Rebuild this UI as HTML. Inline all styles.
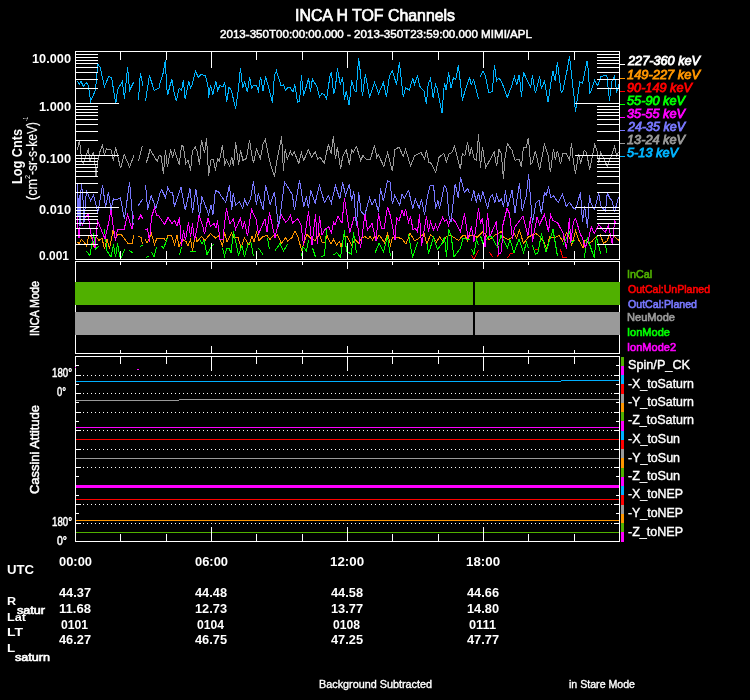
<!DOCTYPE html>
<html><head><meta charset="utf-8"><style>
html,body{margin:0;padding:0;background:#000;width:750px;height:700px;overflow:hidden}
svg{position:absolute;left:0;top:0;will-change:transform}
</style></head><body>
<svg width="750" height="700" viewBox="0 0 750 700" shape-rendering="crispEdges">
<defs><clipPath id="c1"><rect x="75" y="51" width="545" height="209"/></clipPath></defs>
<g clip-path="url(#c1)">
<polyline points="77.0,242.0 79.0,243.5 81.5,239.5 84.0,242.0 86.5,246.0 89.0,235.0 91.5,237.0 93.5,245.5 96.5,237.0 99.0,240.5 102.0,238.0 104.5,249.0 107.0,239.0 109.5,249.0 113.0,230.5 115.5,239.0 118.0,234.0 121.5,235.0 124.0,238.0 128.0,243.5 132.5,243.0 133.5,235.5" fill="none" stroke="#ff9600" stroke-width="1"/>
<polyline points="138.5,236.0 141.0,237.5 142.5,244.5" fill="none" stroke="#ff9600" stroke-width="1"/>
<polyline points="145.0,239.5 147.0,242.5 149.8,238.0 151.0,232.5 154.5,244.5 157.0,238.0 163.5,238.0 166.0,241.0 168.0,235.0 171.5,235.5 174.5,244.5 177.0,235.5 179.0,247.0 182.0,239.0 186.0,241.5 188.0,246.0 190.5,239.5 192.5,250.5 195.5,234.0 197.0,241.5 201.5,236.5 205.0,240.5 210.5,233.5 215.5,238.0 218.5,236.0 222.5,246.0 224.5,232.5 227.0,242.0 231.5,233.0 234.0,238.0 238.0,237.5 241.0,247.5 244.5,238.0 249.0,245.0 252.0,236.0 254.0,241.5 256.5,232.5 259.0,240.5 263.0,236.5 267.0,235.5 270.0,239.5 273.0,236.0 277.5,235.0 281.5,243.5 285.5,237.5 287.5,241.0 292.0,237.5 295.0,231.0 298.0,237.0 301.5,250.0 307.0,234.5 311.0,238.5 315.0,240.5 319.5,234.0 322.0,242.0 325.0,242.0 327.0,235.5 331.0,244.0 333.5,239.5 336.5,245.0 339.5,241.5 341.0,247.0 344.0,236.0 347.5,237.0 351.5,245.0 355.0,239.5 358.5,243.0 361.5,238.5 365.0,236.5 368.0,239.0 370.0,236.5 372.5,240.0 375.0,236.0 377.0,238.5 379.0,235.0 381.5,238.0 384.5,243.0 387.5,233.5 390.5,245.0 392.5,237.5 397.0,237.0 402.0,239.0 406.0,244.0 410.0,233.5 414.5,240.5 417.5,239.5 424.0,233.5 427.0,244.0 430.5,234.5 433.0,237.0 436.5,242.0 439.5,237.0 443.5,242.0 446.0,237.0 450.5,235.0 454.0,237.5 458.5,240.5 462.5,236.0 465.0,235.0 467.5,241.0 470.0,235.0 474.0,235.0 477.0,237.5 482.5,232.0 485.5,234.5 489.0,239.5 493.0,237.0 495.0,235.0 501.5,231.5 503.5,237.0 508.0,239.5 511.0,238.0 514.5,233.5 516.5,238.0 519.5,230.0 523.5,243.5 528.5,237.0 532.5,235.0 536.0,233.5 539.0,236.0 544.0,242.5 547.0,249.0 549.5,237.0 554.5,238.0 559.0,235.5 562.6,241.0 566.5,232.7 569.5,237.5 571.7,245.3 575.6,231.0 578.6,239.7 583.0,247.5 585.1,240.1 588.6,243.1 592.1,241.4 595.5,237.1 600.3,234.9 603.3,243.1 606.8,241.4 609.8,234.5 613.7,235.8 618.9,240.5" fill="none" stroke="#ff9600" stroke-width="1"/>
<polyline points="471.5,255.0 474.0,259.5 478.5,250.0" fill="none" stroke="#ff0000" stroke-width="1"/>
<polyline points="489.0,252.0 493.0,257.0" fill="none" stroke="#ff0000" stroke-width="1"/>
<polyline points="497.0,257.0 499.5,253.0" fill="none" stroke="#ff0000" stroke-width="1"/>
<polyline points="507.5,258.0 510.5,253.5 512.5,254.0" fill="none" stroke="#ff0000" stroke-width="1"/>
<polyline points="535.0,249.0 537.5,249.0" fill="none" stroke="#ff0000" stroke-width="1"/>
<polyline points="560.5,249.5 562.5,257.0 566.5,257.0" fill="none" stroke="#ff0000" stroke-width="1"/>
<polyline points="86.0,251.0 90.0,255.5 93.5,233.5 95.5,249.0 99.0,246.0" fill="none" stroke="#00ff00" stroke-width="1"/>
<polyline points="104.5,229.5 107.0,251.0 111.0,257.0 113.5,244.5 115.5,257.0 117.5,243.5 120.5,259.5 124.5,249.5" fill="none" stroke="#00ff00" stroke-width="1"/>
<polyline points="129.5,250.5 133.0,253.0" fill="none" stroke="#00ff00" stroke-width="1"/>
<polyline points="140.0,246.5 143.0,245.0" fill="none" stroke="#00ff00" stroke-width="1"/>
<polyline points="146.0,257.5 148.5,256.0" fill="none" stroke="#00ff00" stroke-width="1"/>
<polyline points="151.5,252.0 154.0,257.0 156.5,247.0" fill="none" stroke="#00ff00" stroke-width="1"/>
<polyline points="161.5,246.0 163.5,248.5 167.5,238.0" fill="none" stroke="#00ff00" stroke-width="1"/>
<polyline points="179.5,255.0 181.5,247.0" fill="none" stroke="#00ff00" stroke-width="1"/>
<polyline points="190.5,251.0 193.0,252.0 195.5,251.0" fill="none" stroke="#00ff00" stroke-width="1"/>
<polyline points="199.5,239.0 202.0,244.0 204.0,240.0 207.0,254.5 211.0,247.0 214.0,244.0" fill="none" stroke="#00ff00" stroke-width="1"/>
<polyline points="222.5,248.0 224.5,256.0 226.5,249.0 229.0,248.0 231.0,253.0 233.5,231.5 238.5,255.0 242.0,245.5 244.5,257.0 248.0,244.0 251.0,242.5 253.5,256.5" fill="none" stroke="#00ff00" stroke-width="1"/>
<polyline points="258.5,248.0 263.5,255.5" fill="none" stroke="#00ff00" stroke-width="1"/>
<polyline points="267.5,238.5 269.5,249.5" fill="none" stroke="#00ff00" stroke-width="1"/>
<polyline points="274.5,251.5 280.0,243.5 283.5,251.0 287.5,244.5" fill="none" stroke="#00ff00" stroke-width="1"/>
<polyline points="301.5,256.5 303.0,247.0 306.5,251.0 308.5,240.5" fill="none" stroke="#00ff00" stroke-width="1"/>
<polyline points="312.5,248.0 315.5,257.0" fill="none" stroke="#00ff00" stroke-width="1"/>
<polyline points="321.5,256.5 324.5,255.5 326.5,229.5" fill="none" stroke="#00ff00" stroke-width="1"/>
<polyline points="333.5,255.0 336.5,252.5 340.5,257.0 344.5,230.5 346.5,251.5 351.5,254.0 353.5,232.5 356.5,253.5" fill="none" stroke="#00ff00" stroke-width="1"/>
<polyline points="375.0,253.0 379.0,243.5 383.5,251.5 387.5,236.5 390.5,256.5" fill="none" stroke="#00ff00" stroke-width="1"/>
<polyline points="408.5,234.5 412.5,257.0 417.5,242.5" fill="none" stroke="#00ff00" stroke-width="1"/>
<polyline points="427.0,242.5 428.5,253.5 433.5,237.5 437.5,249.5 442.5,243.0 444.5,237.0 446.5,256.5 448.5,229.5 451.0,235.0 454.0,257.0 460.5,248.0 463.0,238.0 469.5,240.0" fill="none" stroke="#00ff00" stroke-width="1"/>
<polyline points="471.5,249.0 474.0,254.5 476.5,239.5 478.5,245.0" fill="none" stroke="#00ff00" stroke-width="1"/>
<polyline points="480.5,236.0 483.0,243.5 486.0,240.0 488.5,237.0 491.5,236.5 495.5,244.0 497.5,247.0 501.0,235.5 507.5,247.5 510.0,239.5 514.0,253.0 519.0,239.0 523.5,252.5 526.5,242.5 528.5,248.0" fill="none" stroke="#00ff00" stroke-width="1"/>
<polyline points="532.5,245.0 535.5,254.5 538.0,252.5 541.5,233.5 546.0,252.0 553.0,229.5 557.5,256.5" fill="none" stroke="#00ff00" stroke-width="1"/>
<polyline points="563.0,244.5 566.5,238.4 569.5,231.9 572.1,242.3 575.2,240.1" fill="none" stroke="#00ff00" stroke-width="1"/>
<polyline points="584.3,257.9 587.3,237.5 594.2,257.9 596.4,236.2 600.7,253.5" fill="none" stroke="#00ff00" stroke-width="1"/>
<polyline points="605.1,243.6 607.2,253.5" fill="none" stroke="#00ff00" stroke-width="1"/>
<polyline points="77.0,217.0 79.0,238.0 80.5,221.0 82.5,225.0 84.5,219.0 88.0,214.0 90.5,232.0 95.0,248.0 97.5,220.5 105.0,239.0 109.0,221.0 111.0,209.0 113.0,225.0 115.5,241.0 117.5,229.5 124.0,230.0 127.5,214.5 132.0,229.0 133.5,215.0" fill="none" stroke="#ff00ff" stroke-width="1"/>
<polyline points="138.0,220.4 140.8,215.0 142.8,219.2" fill="none" stroke="#ff00ff" stroke-width="1"/>
<polyline points="145.0,230.0 147.5,229.0 149.5,241.5 151.5,217.0 154.5,208.0 156.5,215.0 158.5,215.5 164.5,224.5 168.0,217.5 172.0,223.5 174.5,220.5 177.0,226.0 179.5,217.5 181.5,246.0 183.5,230.0 185.5,240.0 188.5,222.5 190.5,237.0 192.5,223.5 194.5,240.0 197.0,228.5 199.0,215.0 202.5,225.0 204.5,234.0 208.0,218.0 210.5,226.5 214.0,223.5 216.0,228.0 217.5,220.5 220.0,240.0 223.0,239.0 224.5,224.5 226.5,208.5 228.0,216.0 230.0,223.5 233.5,219.0 235.5,229.5 240.5,218.0 242.5,229.0 244.5,221.0 247.5,236.0 249.5,222.5 251.5,209.5 256.0,219.0 258.5,234.0 265.0,219.0 267.0,232.0 269.5,212.5 275.0,238.0 278.0,224.0 281.5,215.0 285.5,222.0 288.0,220.0 290.5,215.5 292.5,223.0 297.5,218.5 301.0,225.0 303.5,245.0 306.0,228.0 308.5,211.5 312.0,245.0 315.5,214.5 317.5,244.0 319.5,216.0 322.0,235.0 324.5,230.0 328.5,226.5 331.5,233.0 333.5,222.0 335.0,225.0 338.0,216.5 342.0,223.0 344.4,198.2 349.8,233.0 354.0,217.0 357.0,220.5 360.5,248.0 363.0,229.0 365.0,214.0 367.5,230.0 372.0,223.5 376.0,241.0 378.5,213.5 381.5,228.5 384.0,229.0 387.5,207.0 390.5,216.0 395.0,240.0 396.5,218.0 399.0,221.0 402.0,210.5 404.0,216.0 405.5,209.0 408.5,222.5 410.5,216.0 413.0,230.0 415.0,228.0 417.5,232.0 419.5,214.5 421.5,246.0 426.5,216.5 428.5,231.5 430.5,221.5 433.5,230.0 435.5,224.5 437.5,229.5 442.5,217.5 444.5,221.0 446.5,219.5 448.5,225.5 451.5,217.5 455.0,221.5 460.5,231.5 464.5,213.5 468.0,238.5 471.5,226.5 474.0,241.5 478.5,208.5 480.5,223.5 482.5,218.0 485.0,247.0 487.5,213.5 490.0,236.0 496.5,221.5 498.5,254.0 501.5,252.5 503.0,224.5 507.0,208.5 509.5,213.5 512.5,239.0 514.5,227.5 523.0,216.0 528.0,235.5 530.5,217.5 532.5,241.5 537.0,217.5 539.5,224.5 544.5,214.5 548.5,232.0 550.5,214.5 553.0,220.5 557.5,222.5 560.0,227.5 563.0,232.7 566.5,249.2 569.4,217.6 570.8,243.1 573.4,222.3 575.6,218.4 580.4,234.5 582.5,237.9 585.1,247.5 588.2,240.5 591.2,226.7 594.2,233.6 598.6,224.5 605.1,232.3 608.5,225.4 612.4,245.3 614.6,220.6 616.3,223.2 618.9,223.2" fill="none" stroke="#ff00ff" stroke-width="1"/>
<polyline points="77.2,184.4 78.0,216.8 79.2,195.2 80.0,226.4 81.2,183.2 82.8,195.2 84.0,222.8 86.4,190.4 90.6,200.6 93.6,195.2 97.8,212.6 102.6,185.0 105.6,207.2 108.4,192.2 111.0,209.6 113.4,198.8 115.8,200.0 120.4,197.6 124.4,219.2 129.6,182.0 133.2,225.2" fill="none" stroke="#7878ff" stroke-width="1"/>
<polyline points="138.0,206.0 142.8,198.8" fill="none" stroke="#7878ff" stroke-width="1"/>
<polyline points="145.6,185.0 147.6,209.6 151.2,195.8 156.0,208.4 160.0,192.8 161.8,189.8 165.4,197.6 167.8,187.4 170.2,192.2 172.6,192.2 174.4,206.6 181.0,187.4 185.2,210.2 190.0,188.6 192.6,213.2 195.8,188.6 199.6,216.2 201.8,196.4 208.6,214.4 211.0,205.4 213.0,214.4 215.4,190.4 218.8,192.2 221.8,197.0 225.8,202.4 229.4,185.0 231.8,209.6 233.2,192.8 235.6,205.4 239.2,201.8 242.8,208.4 244.6,199.4 247.4,205.4 250.4,199.4 253.4,181.4 256.4,205.4 258.2,193.4 263.2,209.6 265.6,185.0 270.2,204.8 274.4,192.2 278.6,227.0 284.6,182.0 292.4,194.6 294.4,210.2 299.6,180.2 303.8,207.2 306.4,196.4 308.4,208.4 310.8,190.4 315.2,203.0 319.4,185.0 324.4,202.4 328.4,195.8 331.4,203.0 335.4,185.6 339.8,198.8 342.6,182.6 345.6,195.2 349.4,183.8 351.6,201.2 353.8,191.6 356.4,226.4 358.6,192.2 361.2,212.0 364.8,215.0 369.6,197.6 372.0,204.8 375.0,199.4 378.6,212.0 380.4,188.6 383.4,201.2 387.4,180.8 390.0,182.0 392.4,204.2 394.8,195.2 399.6,205.4 402.0,194.6 404.4,198.2 408.6,190.4 412.8,208.4 415.2,198.8 419.2,208.4 421.6,199.4 424.6,215.0 427.0,198.8 430.0,185.6 433.6,185.6 435.6,209.0 437.8,200.6 439.6,208.4 444.4,185.6 446.8,189.2 449.2,218.0 451.0,222.2 455.2,183.8 458.2,197.6 460.6,177.2 464.2,192.2 467.8,188.6 469.6,193.4" fill="none" stroke="#7878ff" stroke-width="1"/>
<polyline points="471.4,200.6 473.8,190.4 476.2,202.4 478.6,193.4 480.4,201.8 482.8,191.6 487.6,208.4 490.0,197.6 492.4,194.6 494.8,202.4 496.6,194.6 499.0,201.8 501.4,198.8 503.6,207.2 505.4,190.4 507.8,207.2 512.0,189.8 515.0,213.2 519.4,183.2 522.2,210.8 526.4,195.2 528.6,174.2 532.4,222.8 536.0,203.0 539.0,200.0 541.4,213.8 544.4,192.8 546.2,195.2 548.6,187.4 551.0,198.2 553.4,195.8 558.2,202.4 562.5,194.3 566.3,206.5 569.5,202.4 573.5,208.3 575.8,209.2 580.5,192.1 582.5,222.2 584.5,205.6 587.5,227.6 589.5,195.2 591.1,203.8 594.7,209.6 598.7,193.4 601.0,206.0 605.5,211.4 607.3,192.5 610.0,198.8 611.8,199.7 614.5,212.3 618.5,197.0" fill="none" stroke="#7878ff" stroke-width="1"/>
<polyline points="77.4,150.2 79.2,140.6 80.4,146.6 81.6,161.0 83.6,163.4 85.8,156.2 88.4,149.6 90.0,161.0 91.8,155.0 93.6,152.6 95.2,165.8 96.0,176.6 97.2,167.0 97.8,161.0 99.6,152.6 102.4,145.4 104.4,155.0 106.4,149.0 111.0,149.6 113.4,161.0 115.6,147.2 120.6,168.2 124.2,154.4 129.6,167.0 133.8,155.6" fill="none" stroke="#9a9a9a" stroke-width="1"/>
<polyline points="138.6,161.0 142.2,146.0" fill="none" stroke="#9a9a9a" stroke-width="1"/>
<polyline points="145.8,163.4 147.6,159.2 150.0,149.6 157.2,161.6 159.0,155.6 161.2,156.2 163.4,174.2 165.4,150.2 167.4,167.0 170.6,149.6 172.6,157.4 174.4,150.2 179.2,164.6 181.6,145.4 183.4,146.6 185.8,163.4 188.2,160.4 190.6,170.6 192.4,150.8 195.4,147.2 197.2,151.4 199.6,165.2 201.4,140.0 203.0,146.6 204.6,153.2 206.6,138.2 208.6,176.0 211.0,159.8 213.4,159.2 215.4,170.6 217.6,158.6 219.4,161.0 222.4,145.4 224.8,164.0 226.6,159.8 229.6,166.4 231.8,156.8 233.4,166.4 235.6,142.4 238.6,164.6 240.6,149.6 242.8,160.4 246.4,158.6 249.6,140.0 251.2,151.4 253.4,163.4 256.4,149.0 260.4,158.6 263.0,144.2 265.4,139.4 269.6,161.0 274.4,176.6 276.8,161.0 279.8,146.6 281.6,136.4 283.4,170.6 285.2,149.0 287.2,159.2 290.4,151.4 292.4,155.6 294.2,152.0 298.8,163.4 301.4,152.6 303.8,160.4 308.4,149.6 311.6,157.4 315.2,151.4 317.6,159.2 320.0,156.8 324.2,163.4 328.4,144.2 330.0,150.2 331.2,153.8 333.4,136.4 335.4,159.2 337.4,147.2 340.6,169.4 342.6,156.8 346.2,149.6 349.4,164.6 351.6,149.6 353.4,152.0 356.6,146.6 360.6,160.4 363.0,155.6 366.0,159.2 370.2,159.2 374.6,145.4 376.8,157.4 378.2,154.4 383.8,166.4 387.6,152.6 392.4,171.2 394.8,149.6 399.0,147.2 403.2,156.2 405.6,149.6 410.6,165.8 414.6,155.6 421.0,152.6 424.6,159.2 426.4,149.6 428.8,162.2 431.2,163.4 435.6,172.4 439.0,157.4 443.8,153.2 446.4,162.2 449.2,153.8 451.6,152.6 454.6,146.4 460.4,169.4 462.4,153.2 464.8,155.6 467.6,142.4 469.6,156.2 471.4,147.2 474.4,159.2 476.4,160.4 478.6,134.0 480.4,168.2 482.4,146.6 485.8,167.6 494.2,152.0 496.6,166.4 499.0,149.6 501.4,153.8 503.4,179.0 504.8,159.8 507.4,143.6 512.0,150.2 515.0,160.4 519.2,159.2 521.4,167.0 523.4,147.2 526.4,147.2 528.4,137.6 530.6,164.0 532.4,162.8 535.4,150.8 539.6,170.0 544.4,144.2 548.0,155.0 550.4,172.4 553.4,149.0 555.4,159.8 557.4,150.8 560.6,164.0 562.7,153.8 566.3,153.8 569.5,160.1 571.5,143.0 573.3,161.0 575.5,173.6 578.5,154.3 580.7,162.8 584.3,150.2 586.6,152.5 589.7,170.0 594.7,144.4 596.9,150.2 598.7,162.8 600.5,152.5 603.2,157.4 607.3,166.4 611.8,154.7 614.5,146.2 616.7,155.6 618.5,152.0" fill="none" stroke="#9a9a9a" stroke-width="1"/>
<polyline points="77.4,80.8 79.2,84.2 81.0,81.4 83.4,86.2 86.4,82.6 88.2,85.0 90.6,101.2 95.4,90.4 97.8,64.0 100.2,67.6 104.4,86.8 108.6,76.6 111.6,77.8 115.8,103.6 117.6,89.8 122.4,81.4 124.4,98.8 127.6,67.0 129.6,90.4 133.8,82.0" fill="none" stroke="#00b4ff" stroke-width="1"/>
<polyline points="138.4,100.0 140.4,73.0 142.8,85.6" fill="none" stroke="#00b4ff" stroke-width="1"/>
<polyline points="145.6,100.6 149.4,75.4 154.2,90.4 159.0,88.0 160.0,83.2 163.0,73.6 165.4,60.4 166.6,86.8 167.8,95.2 169.6,86.8 172.0,79.6 173.8,91.6 176.2,101.2 179.2,88.0 181.6,90.4 183.4,80.2 185.2,99.4 188.8,81.4 190.6,88.0 192.4,83.8 195.4,71.2 198.4,77.2 201.4,74.2 205.6,76.0 208.0,86.8 208.6,98.2 210.4,85.0 212.8,94.6 215.8,81.4 217.6,90.4 220.0,85.6 223.0,86.8 224.8,82.6 226.6,102.4 229.0,87.4 231.4,90.4 235.6,109.0 238.6,88.0 240.4,68.2 242.8,88.0 244.6,82.0 247.4,92.2 249.6,76.6 251.6,88.0 253.4,85.6 256.4,85.6 258.4,91.0 260.6,76.6 263.0,91.0 265.6,76.6 269.0,88.6 272.4,103.0 274.4,76.0 276.4,70.6 281.0,85.6 283.4,85.0 285.8,90.4 287.6,87.4 290.6,88.0 293.0,92.2 294.8,84.4 297.6,102.4 299.6,101.2 301.4,75.4 303.6,95.8 306.2,86.8 308.6,78.4 310.4,92.2 312.4,79.0 317.0,86.8 319.6,97.0 321.8,93.4 324.2,94.6 326.6,98.8 330.0,76.0 331.4,72.4 333.6,94.0 335.4,87.4 337.4,68.2 340.2,84.4 342.6,77.2 344.4,100.0 346.2,91.0 349.2,105.4 351.6,80.2 354.6,91.0 356.2,91.6 358.6,58.0 360.6,74.2 362.4,96.4 365.4,74.2 369.6,97.6 374.6,82.6 378.6,93.4 383.4,82.6 386.4,97.0 389.4,76.6 392.2,70.6 396.6,84.4 399.4,62.2 403.2,97.0 405.6,87.4 409.2,90.4 412.8,78.4 414.6,84.4 417.4,75.4 419.6,86.2 424.0,91.0 426.4,104.2 428.2,84.4 430.6,78.4 433.2,98.2 435.4,84.4 437.2,88.6 442.0,113.2 444.4,82.6 446.2,90.4 448.6,72.4 451.0,88.0 453.4,77.8 455.8,79.6 458.4,65.2 462.4,100.6 464.8,91.6 469.6,77.8 471.2,84.4 473.6,79.6 478.6,99.4" fill="none" stroke="#00b4ff" stroke-width="1"/>
<polyline points="480.4,76.6 482.8,71.2 485.2,75.4 488.8,92.8 492.4,91.6 494.4,65.2 496.6,80.8 499.0,77.8 502.4,83.8 507.2,97.6 511.4,86.8 514.4,76.6 516.8,84.4 519.2,74.8 521.6,97.0 523.4,71.8 525.2,76.0 530.6,87.4 532.4,75.4 535.4,93.4 539.6,76.6 541.4,88.0 544.6,81.4 548.0,102.4 552.8,70.6 555.2,80.8 557.4,62.2 561.2,92.2 562.7,91.6 564.5,82.6 567.7,67.3 569.5,56.1 571.3,72.7 574.4,99.7 575.5,112.3 577.1,100.2 579.8,81.7 582.5,83.5 587.0,61.0 588.4,70.0 589.7,94.3 594.7,80.4 597.8,85.8 601.0,76.3 606.8,75.4 609.5,100.6 611.8,81.7 614.5,76.3 616.7,92.5 619.0,84.4" fill="none" stroke="#00b4ff" stroke-width="1"/>
</g>
<rect x="75" y="51" width="545" height="1" fill="#fff"/>
<rect x="75" y="259" width="545" height="1" fill="#fff"/>
<rect x="75" y="51" width="1" height="209" fill="#fff"/>
<rect x="619" y="51" width="1" height="209" fill="#fff"/>
<rect x="120" y="51" width="1" height="9" fill="#fff"/>
<rect x="120" y="251" width="1" height="9" fill="#fff"/>
<rect x="166" y="51" width="1" height="9" fill="#fff"/>
<rect x="166" y="251" width="1" height="9" fill="#fff"/>
<rect x="211" y="51" width="1" height="17" fill="#fff"/>
<rect x="211" y="243" width="1" height="17" fill="#fff"/>
<rect x="256" y="51" width="1" height="9" fill="#fff"/>
<rect x="256" y="251" width="1" height="9" fill="#fff"/>
<rect x="302" y="51" width="1" height="9" fill="#fff"/>
<rect x="302" y="251" width="1" height="9" fill="#fff"/>
<rect x="347" y="51" width="1" height="17" fill="#fff"/>
<rect x="347" y="243" width="1" height="17" fill="#fff"/>
<rect x="392" y="51" width="1" height="9" fill="#fff"/>
<rect x="392" y="251" width="1" height="9" fill="#fff"/>
<rect x="438" y="51" width="1" height="9" fill="#fff"/>
<rect x="438" y="251" width="1" height="9" fill="#fff"/>
<rect x="483" y="51" width="1" height="17" fill="#fff"/>
<rect x="483" y="243" width="1" height="17" fill="#fff"/>
<rect x="528" y="51" width="1" height="9" fill="#fff"/>
<rect x="528" y="251" width="1" height="9" fill="#fff"/>
<rect x="574" y="51" width="1" height="9" fill="#fff"/>
<rect x="574" y="251" width="1" height="9" fill="#fff"/>
<rect x="75" y="88" width="23" height="1" fill="#fff"/>
<rect x="597" y="88" width="23" height="1" fill="#fff"/>
<rect x="75" y="79" width="23" height="1" fill="#fff"/>
<rect x="597" y="79" width="23" height="1" fill="#fff"/>
<rect x="75" y="72" width="23" height="1" fill="#fff"/>
<rect x="597" y="72" width="23" height="1" fill="#fff"/>
<rect x="75" y="67" width="23" height="1" fill="#fff"/>
<rect x="597" y="67" width="23" height="1" fill="#fff"/>
<rect x="75" y="63" width="23" height="1" fill="#fff"/>
<rect x="597" y="63" width="23" height="1" fill="#fff"/>
<rect x="75" y="60" width="23" height="1" fill="#fff"/>
<rect x="597" y="60" width="23" height="1" fill="#fff"/>
<rect x="75" y="57" width="23" height="1" fill="#fff"/>
<rect x="597" y="57" width="23" height="1" fill="#fff"/>
<rect x="75" y="54" width="23" height="1" fill="#fff"/>
<rect x="597" y="54" width="23" height="1" fill="#fff"/>
<rect x="75" y="140" width="23" height="1" fill="#fff"/>
<rect x="597" y="140" width="23" height="1" fill="#fff"/>
<rect x="75" y="131" width="23" height="1" fill="#fff"/>
<rect x="597" y="131" width="23" height="1" fill="#fff"/>
<rect x="75" y="124" width="23" height="1" fill="#fff"/>
<rect x="597" y="124" width="23" height="1" fill="#fff"/>
<rect x="75" y="119" width="23" height="1" fill="#fff"/>
<rect x="597" y="119" width="23" height="1" fill="#fff"/>
<rect x="75" y="115" width="23" height="1" fill="#fff"/>
<rect x="597" y="115" width="23" height="1" fill="#fff"/>
<rect x="75" y="112" width="23" height="1" fill="#fff"/>
<rect x="597" y="112" width="23" height="1" fill="#fff"/>
<rect x="75" y="109" width="23" height="1" fill="#fff"/>
<rect x="597" y="109" width="23" height="1" fill="#fff"/>
<rect x="75" y="106" width="23" height="1" fill="#fff"/>
<rect x="597" y="106" width="23" height="1" fill="#fff"/>
<rect x="75" y="103" width="44" height="1" fill="#fff"/>
<rect x="575" y="103" width="45" height="1" fill="#fff"/>
<rect x="75" y="192" width="23" height="1" fill="#fff"/>
<rect x="597" y="192" width="23" height="1" fill="#fff"/>
<rect x="75" y="183" width="23" height="1" fill="#fff"/>
<rect x="597" y="183" width="23" height="1" fill="#fff"/>
<rect x="75" y="176" width="23" height="1" fill="#fff"/>
<rect x="597" y="176" width="23" height="1" fill="#fff"/>
<rect x="75" y="171" width="23" height="1" fill="#fff"/>
<rect x="597" y="171" width="23" height="1" fill="#fff"/>
<rect x="75" y="167" width="23" height="1" fill="#fff"/>
<rect x="597" y="167" width="23" height="1" fill="#fff"/>
<rect x="75" y="164" width="23" height="1" fill="#fff"/>
<rect x="597" y="164" width="23" height="1" fill="#fff"/>
<rect x="75" y="161" width="23" height="1" fill="#fff"/>
<rect x="597" y="161" width="23" height="1" fill="#fff"/>
<rect x="75" y="158" width="23" height="1" fill="#fff"/>
<rect x="597" y="158" width="23" height="1" fill="#fff"/>
<rect x="75" y="155" width="44" height="1" fill="#fff"/>
<rect x="575" y="155" width="45" height="1" fill="#fff"/>
<rect x="75" y="244" width="23" height="1" fill="#fff"/>
<rect x="597" y="244" width="23" height="1" fill="#fff"/>
<rect x="75" y="235" width="23" height="1" fill="#fff"/>
<rect x="597" y="235" width="23" height="1" fill="#fff"/>
<rect x="75" y="228" width="23" height="1" fill="#fff"/>
<rect x="597" y="228" width="23" height="1" fill="#fff"/>
<rect x="75" y="223" width="23" height="1" fill="#fff"/>
<rect x="597" y="223" width="23" height="1" fill="#fff"/>
<rect x="75" y="219" width="23" height="1" fill="#fff"/>
<rect x="597" y="219" width="23" height="1" fill="#fff"/>
<rect x="75" y="216" width="23" height="1" fill="#fff"/>
<rect x="597" y="216" width="23" height="1" fill="#fff"/>
<rect x="75" y="213" width="23" height="1" fill="#fff"/>
<rect x="597" y="213" width="23" height="1" fill="#fff"/>
<rect x="75" y="210" width="23" height="1" fill="#fff"/>
<rect x="597" y="210" width="23" height="1" fill="#fff"/>
<rect x="75" y="207" width="44" height="1" fill="#fff"/>
<rect x="575" y="207" width="45" height="1" fill="#fff"/>
<rect x="620" y="64" width="5" height="1" fill="#ffffff"/>
<rect x="620" y="78" width="5" height="1" fill="#ff9600"/>
<rect x="620" y="91" width="5" height="1" fill="#ff0000"/>
<rect x="620" y="104" width="5" height="1" fill="#00ff00"/>
<rect x="620" y="117" width="5" height="1" fill="#ff00ff"/>
<rect x="620" y="130" width="5" height="1" fill="#7878ff"/>
<rect x="620" y="143" width="5" height="1" fill="#9a9a9a"/>
<rect x="620" y="156" width="5" height="1" fill="#00b4ff"/>
<rect x="75" y="282" width="545" height="23" fill="#50b000"/>
<rect x="75" y="312" width="545" height="23" fill="#9a9a9a"/>
<rect x="473" y="282" width="2" height="53" fill="#000"/>
<rect x="75" y="261" width="545" height="1" fill="#fff"/>
<rect x="75" y="353" width="545" height="1" fill="#fff"/>
<rect x="75" y="261" width="1" height="21" fill="#fff"/>
<rect x="75" y="305" width="1" height="7" fill="#fff"/>
<rect x="75" y="335" width="1" height="19" fill="#fff"/>
<rect x="619" y="261" width="1" height="21" fill="#fff"/>
<rect x="619" y="305" width="1" height="7" fill="#fff"/>
<rect x="619" y="335" width="1" height="19" fill="#fff"/>
<rect x="120" y="261" width="1" height="4" fill="#fff"/>
<rect x="120" y="350" width="1" height="4" fill="#fff"/>
<rect x="166" y="261" width="1" height="4" fill="#fff"/>
<rect x="166" y="350" width="1" height="4" fill="#fff"/>
<rect x="211" y="261" width="1" height="8" fill="#fff"/>
<rect x="211" y="346" width="1" height="8" fill="#fff"/>
<rect x="256" y="261" width="1" height="4" fill="#fff"/>
<rect x="256" y="350" width="1" height="4" fill="#fff"/>
<rect x="302" y="261" width="1" height="4" fill="#fff"/>
<rect x="302" y="350" width="1" height="4" fill="#fff"/>
<rect x="347" y="261" width="1" height="8" fill="#fff"/>
<rect x="347" y="346" width="1" height="8" fill="#fff"/>
<rect x="392" y="261" width="1" height="4" fill="#fff"/>
<rect x="392" y="350" width="1" height="4" fill="#fff"/>
<rect x="438" y="261" width="1" height="4" fill="#fff"/>
<rect x="438" y="350" width="1" height="4" fill="#fff"/>
<rect x="483" y="261" width="1" height="8" fill="#fff"/>
<rect x="483" y="346" width="1" height="8" fill="#fff"/>
<rect x="528" y="261" width="1" height="4" fill="#fff"/>
<rect x="528" y="350" width="1" height="4" fill="#fff"/>
<rect x="574" y="261" width="1" height="4" fill="#fff"/>
<rect x="574" y="350" width="1" height="4" fill="#fff"/>
<line x1="75" y1="375.5" x2="619" y2="375.5" stroke="#fff" stroke-width="1" stroke-dasharray="1 3"/>
<rect x="75" y="375" width="6" height="1" fill="#fff"/>
<rect x="614" y="375" width="6" height="1" fill="#fff"/>
<line x1="75" y1="393.5" x2="619" y2="393.5" stroke="#fff" stroke-width="1" stroke-dasharray="1 3"/>
<rect x="75" y="393" width="6" height="1" fill="#fff"/>
<rect x="614" y="393" width="6" height="1" fill="#fff"/>
<line x1="75" y1="412.5" x2="619" y2="412.5" stroke="#fff" stroke-width="1" stroke-dasharray="1 3"/>
<rect x="75" y="412" width="6" height="1" fill="#fff"/>
<rect x="614" y="412" width="6" height="1" fill="#fff"/>
<line x1="75" y1="430.5" x2="619" y2="430.5" stroke="#fff" stroke-width="1" stroke-dasharray="1 3"/>
<rect x="75" y="430" width="6" height="1" fill="#fff"/>
<rect x="614" y="430" width="6" height="1" fill="#fff"/>
<line x1="75" y1="449.5" x2="619" y2="449.5" stroke="#fff" stroke-width="1" stroke-dasharray="1 3"/>
<rect x="75" y="449" width="6" height="1" fill="#fff"/>
<rect x="614" y="449" width="6" height="1" fill="#fff"/>
<line x1="75" y1="467.5" x2="619" y2="467.5" stroke="#fff" stroke-width="1" stroke-dasharray="1 3"/>
<rect x="75" y="467" width="6" height="1" fill="#fff"/>
<rect x="614" y="467" width="6" height="1" fill="#fff"/>
<line x1="75" y1="486.5" x2="619" y2="486.5" stroke="#fff" stroke-width="1" stroke-dasharray="1 3"/>
<rect x="75" y="486" width="6" height="1" fill="#fff"/>
<rect x="614" y="486" width="6" height="1" fill="#fff"/>
<line x1="75" y1="504.5" x2="619" y2="504.5" stroke="#fff" stroke-width="1" stroke-dasharray="1 3"/>
<rect x="75" y="504" width="6" height="1" fill="#fff"/>
<rect x="614" y="504" width="6" height="1" fill="#fff"/>
<line x1="75" y1="523.5" x2="619" y2="523.5" stroke="#fff" stroke-width="1" stroke-dasharray="1 3"/>
<rect x="75" y="523" width="6" height="1" fill="#fff"/>
<rect x="614" y="523" width="6" height="1" fill="#fff"/>
<rect x="75" y="532" width="4" height="1" fill="#fff"/>
<rect x="616" y="532" width="4" height="1" fill="#fff"/>
<rect x="75" y="513" width="4" height="1" fill="#fff"/>
<rect x="616" y="513" width="4" height="1" fill="#fff"/>
<rect x="75" y="495" width="4" height="1" fill="#fff"/>
<rect x="616" y="495" width="4" height="1" fill="#fff"/>
<rect x="75" y="476" width="4" height="1" fill="#fff"/>
<rect x="616" y="476" width="4" height="1" fill="#fff"/>
<rect x="75" y="458" width="4" height="1" fill="#fff"/>
<rect x="616" y="458" width="4" height="1" fill="#fff"/>
<rect x="75" y="439" width="4" height="1" fill="#fff"/>
<rect x="616" y="439" width="4" height="1" fill="#fff"/>
<rect x="75" y="421" width="4" height="1" fill="#fff"/>
<rect x="616" y="421" width="4" height="1" fill="#fff"/>
<rect x="75" y="402" width="4" height="1" fill="#fff"/>
<rect x="616" y="402" width="4" height="1" fill="#fff"/>
<rect x="75" y="384" width="4" height="1" fill="#fff"/>
<rect x="616" y="384" width="4" height="1" fill="#fff"/>
<rect x="75" y="365" width="4" height="1" fill="#fff"/>
<rect x="616" y="365" width="4" height="1" fill="#fff"/>
<rect x="75" y="381" width="486" height="1" fill="#00b0ff"/>
<rect x="561" y="380" width="59" height="1" fill="#00b0ff"/>
<rect x="75" y="400" width="104" height="1" fill="#9a9a9a"/>
<rect x="179" y="399" width="441" height="1" fill="#9a9a9a"/>
<rect x="75" y="427" width="545" height="1" fill="#ff00ff"/>
<rect x="75" y="439" width="545" height="1" fill="#ff0000"/>
<rect x="75" y="458" width="545" height="1" fill="#9a9a9a"/>
<rect x="75" y="485" width="545" height="3" fill="#ff00ff"/>
<rect x="75" y="499" width="545" height="1" fill="#ff0000"/>
<rect x="75" y="520" width="545" height="1" fill="#ff9600"/>
<rect x="75" y="532" width="545" height="1" fill="#50b000"/>
<rect x="137" y="369" width="2" height="1" fill="#ff00ff"/>
<rect x="75" y="356" width="545" height="1" fill="#fff"/>
<rect x="75" y="541" width="545" height="1" fill="#fff"/>
<rect x="75" y="356" width="1" height="186" fill="#fff"/>
<rect x="619" y="356" width="1" height="186" fill="#fff"/>
<rect x="75" y="367" width="1" height="1" fill="#ff00ff"/>
<rect x="120" y="356" width="1" height="8" fill="#fff"/>
<rect x="120" y="534" width="1" height="8" fill="#fff"/>
<rect x="166" y="356" width="1" height="8" fill="#fff"/>
<rect x="166" y="534" width="1" height="8" fill="#fff"/>
<rect x="211" y="356" width="1" height="15" fill="#fff"/>
<rect x="211" y="527" width="1" height="15" fill="#fff"/>
<rect x="256" y="356" width="1" height="8" fill="#fff"/>
<rect x="256" y="534" width="1" height="8" fill="#fff"/>
<rect x="302" y="356" width="1" height="8" fill="#fff"/>
<rect x="302" y="534" width="1" height="8" fill="#fff"/>
<rect x="347" y="356" width="1" height="15" fill="#fff"/>
<rect x="347" y="527" width="1" height="15" fill="#fff"/>
<rect x="392" y="356" width="1" height="8" fill="#fff"/>
<rect x="392" y="534" width="1" height="8" fill="#fff"/>
<rect x="438" y="356" width="1" height="8" fill="#fff"/>
<rect x="438" y="534" width="1" height="8" fill="#fff"/>
<rect x="483" y="356" width="1" height="15" fill="#fff"/>
<rect x="483" y="527" width="1" height="15" fill="#fff"/>
<rect x="528" y="356" width="1" height="8" fill="#fff"/>
<rect x="528" y="534" width="1" height="8" fill="#fff"/>
<rect x="574" y="356" width="1" height="8" fill="#fff"/>
<rect x="574" y="534" width="1" height="8" fill="#fff"/>
<rect x="621" y="357" width="3" height="9" fill="#50b000"/>
<rect x="621" y="366" width="3" height="9" fill="#ff00ff"/>
<rect x="621" y="375" width="3" height="9" fill="#00b0ff"/>
<rect x="621" y="384" width="3" height="10" fill="#ff0000"/>
<rect x="621" y="394" width="3" height="9" fill="#9a9a9a"/>
<rect x="621" y="403" width="3" height="9" fill="#ff9600"/>
<rect x="621" y="412" width="3" height="9" fill="#50b000"/>
<rect x="621" y="421" width="3" height="10" fill="#ff00ff"/>
<rect x="621" y="431" width="3" height="9" fill="#00b0ff"/>
<rect x="621" y="440" width="3" height="9" fill="#ff0000"/>
<rect x="621" y="449" width="3" height="9" fill="#9a9a9a"/>
<rect x="621" y="458" width="3" height="10" fill="#ff9600"/>
<rect x="621" y="468" width="3" height="9" fill="#50b000"/>
<rect x="621" y="477" width="3" height="9" fill="#ff00ff"/>
<rect x="621" y="486" width="3" height="9" fill="#00b0ff"/>
<rect x="621" y="495" width="3" height="10" fill="#ff0000"/>
<rect x="621" y="505" width="3" height="9" fill="#9a9a9a"/>
<rect x="621" y="514" width="3" height="9" fill="#ff9600"/>
<rect x="621" y="523" width="3" height="9" fill="#50b000"/>
<rect x="621" y="532" width="3" height="10" fill="#ff00ff"/>
<text x="295.00" y="21.00" font-family="Liberation Sans" font-size="16.00" font-weight="normal" font-style="normal" fill="#fff" stroke="#fff" stroke-width="0.7" textLength="160.01" lengthAdjust="spacingAndGlyphs">INCA H TOF Channels</text>
<text x="220.00" y="38.00" font-family="Liberation Sans" font-size="11.00" font-weight="normal" font-style="normal" fill="#fff" stroke="#fff" stroke-width="0.5" textLength="312.00" lengthAdjust="spacingAndGlyphs">2013-350T00:00:00.000 - 2013-350T23:59:00.000 MIMI/APL</text>
<text x="32.00" y="63.00" font-family="Liberation Sans" font-size="12.50" font-weight="bold" font-style="normal" fill="#fff" textLength="39.03" lengthAdjust="spacingAndGlyphs">10.000</text>
<text x="39.00" y="111.00" font-family="Liberation Sans" font-size="12.50" font-weight="bold" font-style="normal" fill="#fff" textLength="32.03" lengthAdjust="spacingAndGlyphs">1.000</text>
<text x="39.00" y="163.00" font-family="Liberation Sans" font-size="12.50" font-weight="bold" font-style="normal" fill="#fff" textLength="32.00" lengthAdjust="spacingAndGlyphs">0.100</text>
<text x="39.00" y="214.00" font-family="Liberation Sans" font-size="12.50" font-weight="bold" font-style="normal" fill="#fff" textLength="32.00" lengthAdjust="spacingAndGlyphs">0.010</text>
<text x="39.00" y="260.00" font-family="Liberation Sans" font-size="12.50" font-weight="bold" font-style="normal" fill="#fff" textLength="30.00" lengthAdjust="spacingAndGlyphs">0.001</text>
<text x="628.00" y="65.00" font-family="Liberation Sans" font-size="12.00" font-weight="normal" font-style="italic" fill="#ffffff" stroke="#ffffff" stroke-width="0.8" textLength="72.05" lengthAdjust="spacingAndGlyphs">227-360 keV</text>
<text x="627.00" y="79.00" font-family="Liberation Sans" font-size="12.00" font-weight="normal" font-style="italic" fill="#ff9600" stroke="#ff9600" stroke-width="0.8" textLength="73.01" lengthAdjust="spacingAndGlyphs">149-227 keV</text>
<text x="627.00" y="92.00" font-family="Liberation Sans" font-size="12.00" font-weight="normal" font-style="italic" fill="#ff0000" stroke="#ff0000" stroke-width="0.8" textLength="65.01" lengthAdjust="spacingAndGlyphs">90-149 keV</text>
<text x="627.00" y="105.00" font-family="Liberation Sans" font-size="12.00" font-weight="normal" font-style="italic" fill="#00ff00" stroke="#00ff00" stroke-width="0.8" textLength="58.02" lengthAdjust="spacingAndGlyphs">55-90 keV</text>
<text x="627.00" y="118.00" font-family="Liberation Sans" font-size="12.00" font-weight="normal" font-style="italic" fill="#ff00ff" stroke="#ff00ff" stroke-width="0.8" textLength="58.02" lengthAdjust="spacingAndGlyphs">35-55 keV</text>
<text x="628.00" y="131.00" font-family="Liberation Sans" font-size="12.00" font-weight="normal" font-style="italic" fill="#7878ff" stroke="#7878ff" stroke-width="0.8" textLength="57.07" lengthAdjust="spacingAndGlyphs">24-35 keV</text>
<text x="627.00" y="144.00" font-family="Liberation Sans" font-size="12.00" font-weight="normal" font-style="italic" fill="#9a9a9a" stroke="#9a9a9a" stroke-width="0.8" textLength="58.02" lengthAdjust="spacingAndGlyphs">13-24 keV</text>
<text x="627.00" y="157.00" font-family="Liberation Sans" font-size="12.00" font-weight="normal" font-style="italic" fill="#00b4ff" stroke="#00b4ff" stroke-width="0.8" textLength="51.02" lengthAdjust="spacingAndGlyphs">5-13 keV</text>
<text x="627.00" y="278.00" font-family="Liberation Sans" font-size="10.50" font-weight="normal" font-style="normal" fill="#50b000" stroke="#50b000" stroke-width="0.6" textLength="25.04" lengthAdjust="spacingAndGlyphs">InCal</text>
<text x="628.00" y="293.00" font-family="Liberation Sans" font-size="10.50" font-weight="normal" font-style="normal" fill="#ff0000" stroke="#ff0000" stroke-width="0.6" textLength="82.00" lengthAdjust="spacingAndGlyphs">OutCal:UnPlaned</text>
<text x="628.00" y="308.00" font-family="Liberation Sans" font-size="10.50" font-weight="normal" font-style="normal" fill="#7878ff" stroke="#7878ff" stroke-width="0.6" textLength="69.00" lengthAdjust="spacingAndGlyphs">OutCal:Planed</text>
<text x="627.00" y="321.00" font-family="Liberation Sans" font-size="10.50" font-weight="normal" font-style="normal" fill="#9a9a9a" stroke="#9a9a9a" stroke-width="0.6" textLength="48.02" lengthAdjust="spacingAndGlyphs">NeuMode</text>
<text x="627.00" y="336.00" font-family="Liberation Sans" font-size="10.50" font-weight="normal" font-style="normal" fill="#00ff00" stroke="#00ff00" stroke-width="0.6" textLength="43.02" lengthAdjust="spacingAndGlyphs">IonMode</text>
<text x="627.00" y="351.00" font-family="Liberation Sans" font-size="10.50" font-weight="normal" font-style="normal" fill="#ff00ff" stroke="#ff00ff" stroke-width="0.6" textLength="49.02" lengthAdjust="spacingAndGlyphs">IonMode2</text>
<text x="628.00" y="369.00" font-family="Liberation Sans" font-size="13.00" font-weight="normal" font-style="normal" fill="#fff" stroke="#fff" stroke-width="0.4" textLength="62.00" lengthAdjust="spacingAndGlyphs">Spin/P_CK</text>
<text x="628.00" y="388.00" font-family="Liberation Sans" font-size="13.00" font-weight="normal" font-style="normal" fill="#fff" stroke="#fff" stroke-width="0.4" textLength="66.00" lengthAdjust="spacingAndGlyphs">-X_toSaturn</text>
<text x="628.00" y="406.00" font-family="Liberation Sans" font-size="13.00" font-weight="normal" font-style="normal" fill="#fff" stroke="#fff" stroke-width="0.4" textLength="66.00" lengthAdjust="spacingAndGlyphs">-Y_toSaturn</text>
<text x="628.00" y="424.00" font-family="Liberation Sans" font-size="13.00" font-weight="normal" font-style="normal" fill="#fff" stroke="#fff" stroke-width="0.4" textLength="66.00" lengthAdjust="spacingAndGlyphs">-Z_toSaturn</text>
<text x="628.00" y="443.00" font-family="Liberation Sans" font-size="13.00" font-weight="normal" font-style="normal" fill="#fff" stroke="#fff" stroke-width="0.4" textLength="52.00" lengthAdjust="spacingAndGlyphs">-X_toSun</text>
<text x="628.00" y="462.00" font-family="Liberation Sans" font-size="13.00" font-weight="normal" font-style="normal" fill="#fff" stroke="#fff" stroke-width="0.4" textLength="52.00" lengthAdjust="spacingAndGlyphs">-Y_toSun</text>
<text x="628.00" y="480.00" font-family="Liberation Sans" font-size="13.00" font-weight="normal" font-style="normal" fill="#fff" stroke="#fff" stroke-width="0.4" textLength="52.00" lengthAdjust="spacingAndGlyphs">-Z_toSun</text>
<text x="628.00" y="498.00" font-family="Liberation Sans" font-size="13.00" font-weight="normal" font-style="normal" fill="#fff" stroke="#fff" stroke-width="0.4" textLength="55.00" lengthAdjust="spacingAndGlyphs">-X_toNEP</text>
<text x="628.00" y="517.00" font-family="Liberation Sans" font-size="13.00" font-weight="normal" font-style="normal" fill="#fff" stroke="#fff" stroke-width="0.4" textLength="55.00" lengthAdjust="spacingAndGlyphs">-Y_toNEP</text>
<text x="628.00" y="536.00" font-family="Liberation Sans" font-size="13.00" font-weight="normal" font-style="normal" fill="#fff" stroke="#fff" stroke-width="0.4" textLength="55.00" lengthAdjust="spacingAndGlyphs">-Z_toNEP</text>
<text x="52.00" y="377.00" font-family="Liberation Sans" font-size="12.66" font-weight="normal" font-style="normal" fill="#fff" stroke="#fff" stroke-width="0.5" textLength="20.00" lengthAdjust="spacingAndGlyphs">180°</text>
<text x="57.00" y="396.00" font-family="Liberation Sans" font-size="12.66" font-weight="normal" font-style="normal" fill="#fff" stroke="#fff" stroke-width="0.5" textLength="9.00" lengthAdjust="spacingAndGlyphs">0°</text>
<text x="52.00" y="526.00" font-family="Liberation Sans" font-size="12.66" font-weight="normal" font-style="normal" fill="#fff" stroke="#fff" stroke-width="0.5" textLength="20.00" lengthAdjust="spacingAndGlyphs">180°</text>
<text x="57.00" y="545.00" font-family="Liberation Sans" font-size="12.66" font-weight="normal" font-style="normal" fill="#fff" stroke="#fff" stroke-width="0.5" textLength="10.00" lengthAdjust="spacingAndGlyphs">0°</text>
<text x="7.00" y="574.00" font-family="Liberation Sans" font-size="12.94" font-weight="bold" font-style="normal" fill="#fff" textLength="27.12" lengthAdjust="spacingAndGlyphs">UTC</text>
<text x="59.00" y="566.00" font-family="Liberation Sans" font-size="12.94" font-weight="bold" font-style="normal" fill="#fff" textLength="33.00" lengthAdjust="spacingAndGlyphs">00:00</text>
<text x="59.00" y="597.00" font-family="Liberation Sans" font-size="13.00" font-weight="bold" font-style="normal" fill="#fff" textLength="32.00" lengthAdjust="spacingAndGlyphs">44.37</text>
<text x="59.00" y="613.00" font-family="Liberation Sans" font-size="13.00" font-weight="bold" font-style="normal" fill="#fff" textLength="32.03" lengthAdjust="spacingAndGlyphs">11.68</text>
<text x="61.00" y="629.00" font-family="Liberation Sans" font-size="13.00" font-weight="bold" font-style="normal" fill="#fff" textLength="27.00" lengthAdjust="spacingAndGlyphs">0101</text>
<text x="59.00" y="644.00" font-family="Liberation Sans" font-size="13.00" font-weight="bold" font-style="normal" fill="#fff" textLength="32.00" lengthAdjust="spacingAndGlyphs">46.27</text>
<text x="195.00" y="566.00" font-family="Liberation Sans" font-size="12.94" font-weight="bold" font-style="normal" fill="#fff" textLength="33.00" lengthAdjust="spacingAndGlyphs">06:00</text>
<text x="195.00" y="597.00" font-family="Liberation Sans" font-size="13.00" font-weight="bold" font-style="normal" fill="#fff" textLength="32.00" lengthAdjust="spacingAndGlyphs">44.48</text>
<text x="195.00" y="613.00" font-family="Liberation Sans" font-size="13.00" font-weight="bold" font-style="normal" fill="#fff" textLength="32.03" lengthAdjust="spacingAndGlyphs">12.73</text>
<text x="197.00" y="629.00" font-family="Liberation Sans" font-size="13.00" font-weight="bold" font-style="normal" fill="#fff" textLength="27.00" lengthAdjust="spacingAndGlyphs">0104</text>
<text x="195.00" y="644.00" font-family="Liberation Sans" font-size="13.00" font-weight="bold" font-style="normal" fill="#fff" textLength="32.00" lengthAdjust="spacingAndGlyphs">46.75</text>
<text x="330.00" y="566.00" font-family="Liberation Sans" font-size="12.94" font-weight="bold" font-style="normal" fill="#fff" textLength="34.03" lengthAdjust="spacingAndGlyphs">12:00</text>
<text x="331.00" y="597.00" font-family="Liberation Sans" font-size="13.00" font-weight="bold" font-style="normal" fill="#fff" textLength="32.00" lengthAdjust="spacingAndGlyphs">44.58</text>
<text x="331.00" y="613.00" font-family="Liberation Sans" font-size="13.00" font-weight="bold" font-style="normal" fill="#fff" textLength="32.03" lengthAdjust="spacingAndGlyphs">13.77</text>
<text x="333.00" y="629.00" font-family="Liberation Sans" font-size="13.00" font-weight="bold" font-style="normal" fill="#fff" textLength="27.00" lengthAdjust="spacingAndGlyphs">0108</text>
<text x="331.00" y="644.00" font-family="Liberation Sans" font-size="13.00" font-weight="bold" font-style="normal" fill="#fff" textLength="32.00" lengthAdjust="spacingAndGlyphs">47.25</text>
<text x="466.00" y="566.00" font-family="Liberation Sans" font-size="12.94" font-weight="bold" font-style="normal" fill="#fff" textLength="34.03" lengthAdjust="spacingAndGlyphs">18:00</text>
<text x="467.00" y="597.00" font-family="Liberation Sans" font-size="13.00" font-weight="bold" font-style="normal" fill="#fff" textLength="32.00" lengthAdjust="spacingAndGlyphs">44.66</text>
<text x="467.00" y="613.00" font-family="Liberation Sans" font-size="13.00" font-weight="bold" font-style="normal" fill="#fff" textLength="32.03" lengthAdjust="spacingAndGlyphs">14.80</text>
<text x="469.00" y="629.00" font-family="Liberation Sans" font-size="13.00" font-weight="bold" font-style="normal" fill="#fff" textLength="27.00" lengthAdjust="spacingAndGlyphs">0111</text>
<text x="467.00" y="644.00" font-family="Liberation Sans" font-size="13.00" font-weight="bold" font-style="normal" fill="#fff" textLength="32.00" lengthAdjust="spacingAndGlyphs">47.77</text>
<text x="7.00" y="605.00" font-family="Liberation Sans" font-size="11.50" font-weight="bold" font-style="normal" fill="#fff" textLength="9.14" lengthAdjust="spacingAndGlyphs">R</text>
<text x="17.00" y="614.00" font-family="Liberation Sans" font-size="10.42" font-weight="normal" font-style="normal" fill="#fff" stroke="#fff" stroke-width="0.6" textLength="28.00" lengthAdjust="spacingAndGlyphs">satur</text>
<text x="7.00" y="621.00" font-family="Liberation Sans" font-size="11.50" font-weight="bold" font-style="normal" fill="#fff" textLength="19.06" lengthAdjust="spacingAndGlyphs">Lat</text>
<text x="7.00" y="636.00" font-family="Liberation Sans" font-size="11.50" font-weight="bold" font-style="normal" fill="#fff" textLength="16.07" lengthAdjust="spacingAndGlyphs">LT</text>
<text x="7.00" y="652.00" font-family="Liberation Sans" font-size="11.50" font-weight="bold" font-style="normal" fill="#fff" textLength="8.17" lengthAdjust="spacingAndGlyphs">L</text>
<text x="15.00" y="661.00" font-family="Liberation Sans" font-size="10.42" font-weight="normal" font-style="normal" fill="#fff" stroke="#fff" stroke-width="0.6" textLength="35.00" lengthAdjust="spacingAndGlyphs">saturn</text>
<text x="319.00" y="688.00" font-family="Liberation Sans" font-size="10.50" font-weight="normal" font-style="normal" fill="#fff" stroke="#fff" stroke-width="0.35" textLength="113.00" lengthAdjust="spacingAndGlyphs">Background Subtracted</text>
<text x="569.00" y="688.00" font-family="Liberation Sans" font-size="10.50" font-weight="normal" font-style="normal" fill="#fff" stroke="#fff" stroke-width="0.35" textLength="66.00" lengthAdjust="spacingAndGlyphs">in Stare Mode</text>
<text transform="translate(21.50,184.00) rotate(-90)" x="0" y="0" font-family="Liberation Sans" font-size="14.00" font-weight="bold" font-style="normal" fill="#fff" textLength="55.00" lengthAdjust="spacingAndGlyphs">Log Cnts</text>
<text transform="translate(37.00,200.00) rotate(-90)" x="0" y="0" font-family="Liberation Sans" font-size="15.00" font-weight="normal" font-style="normal" fill="#fff" stroke="#fff" stroke-width="0.2" textLength="21.10" lengthAdjust="spacingAndGlyphs">(cm</text>
<text transform="translate(30.00,179.00) rotate(-90)" x="0" y="0" font-family="Liberation Sans" font-size="7.00" font-weight="normal" font-style="normal" fill="#fff" textLength="4.00" lengthAdjust="spacingAndGlyphs">2</text>
<text transform="translate(37.00,175.00) rotate(-90)" x="0" y="0" font-family="Liberation Sans" font-size="15.00" font-weight="normal" font-style="normal" fill="#fff" stroke="#fff" stroke-width="0.2" textLength="53.04" lengthAdjust="spacingAndGlyphs">-sr-s-keV)</text>
<text transform="translate(28.00,121.00) rotate(-90)" x="0" y="0" font-family="Liberation Sans" font-size="7.00" font-weight="normal" font-style="normal" fill="#fff" textLength="4.00" lengthAdjust="spacingAndGlyphs">-1</text>
<text transform="translate(39.00,336.00) rotate(-90)" x="0" y="0" font-family="Liberation Sans" font-size="12.00" font-weight="normal" font-style="normal" fill="#fff" stroke="#fff" stroke-width="0.5" textLength="55.02" lengthAdjust="spacingAndGlyphs">INCA Mode</text>
<text transform="translate(39.00,494.00) rotate(-90)" x="0" y="0" font-family="Liberation Sans" font-size="13.00" font-weight="normal" font-style="normal" fill="#fff" stroke="#fff" stroke-width="0.5" textLength="89.00" lengthAdjust="spacingAndGlyphs">Cassini Attitude</text>
</svg>
</body></html>
